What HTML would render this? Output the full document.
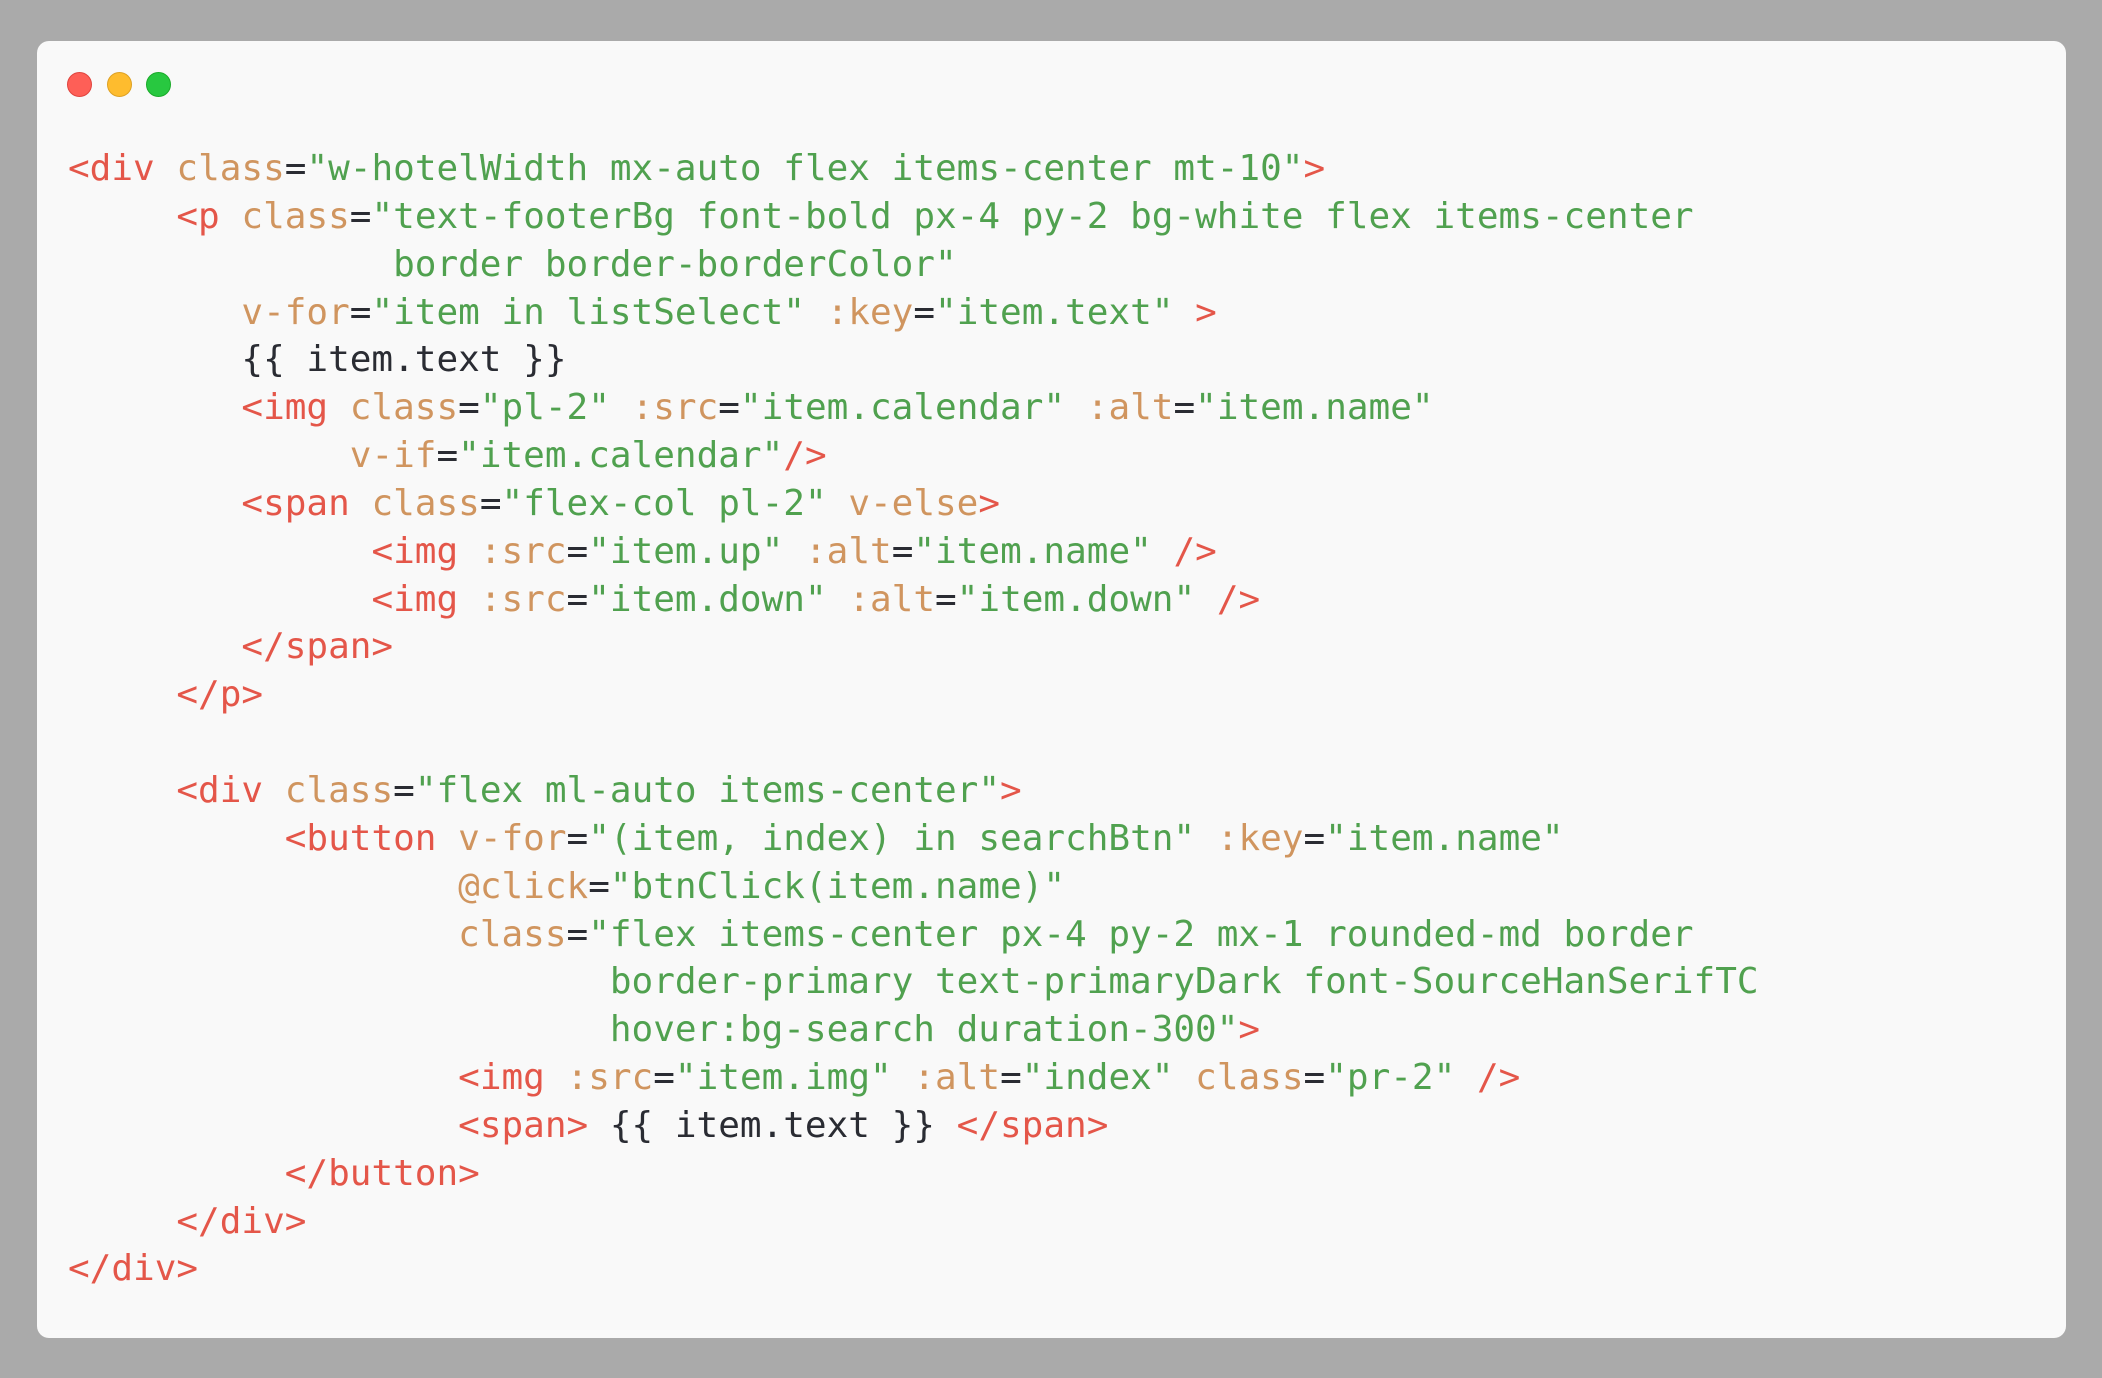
<!DOCTYPE html>
<html><head><meta charset="utf-8"><style>
html,body{margin:0;padding:0;background:#aaaaaa;width:2102px;height:1378px;overflow:hidden}
.card{position:absolute;left:37px;top:41px;width:2029px;height:1297px;background:#f9f9f9;border-radius:12px}
.dot{position:absolute;top:72px;width:25px;height:25px;border-radius:50%}
pre{position:absolute;left:68px;top:145px;margin:0;font-family:"DejaVu Sans Mono","Liberation Mono",monospace;font-size:36px;line-height:47.85px;color:#2a2c33}
.t{color:#e45649}.a{color:#d0955f}.s{color:#50a14f}
</style></head><body>
<div class="card"></div>
<div class="dot" style="left:67px;background:#fe5f57;border:1px solid #e0443e;box-sizing:border-box"></div>
<div class="dot" style="left:107px;background:#febc2e;border:1px solid #dea123;box-sizing:border-box"></div>
<div class="dot" style="left:146px;background:#28c840;border:1px solid #1aab29;box-sizing:border-box"></div>
<pre><span class="t">&lt;div</span> <span class="a">class</span>=<span class="s">"w-hotelWidth mx-auto flex items-center mt-10"</span><span class="t">&gt;</span>
     <span class="t">&lt;p</span> <span class="a">class</span>=<span class="s">"text-footerBg font-bold px-4 py-2 bg-white flex items-center</span>
<span class="s">               border border-borderColor"</span>
        <span class="a">v-for</span>=<span class="s">"item in listSelect"</span> <span class="a">:key</span>=<span class="s">"item.text"</span> <span class="t">&gt;</span>
        {{ item.text }}
        <span class="t">&lt;img</span> <span class="a">class</span>=<span class="s">"pl-2"</span> <span class="a">:src</span>=<span class="s">"item.calendar"</span> <span class="a">:alt</span>=<span class="s">"item.name"</span>
             <span class="a">v-if</span>=<span class="s">"item.calendar"</span><span class="t">/&gt;</span>
        <span class="t">&lt;span</span> <span class="a">class</span>=<span class="s">"flex-col pl-2"</span> <span class="a">v-else</span><span class="t">&gt;</span>
              <span class="t">&lt;img</span> <span class="a">:src</span>=<span class="s">"item.up"</span> <span class="a">:alt</span>=<span class="s">"item.name"</span> <span class="t">/&gt;</span>
              <span class="t">&lt;img</span> <span class="a">:src</span>=<span class="s">"item.down"</span> <span class="a">:alt</span>=<span class="s">"item.down"</span> <span class="t">/&gt;</span>
        <span class="t">&lt;/span&gt;</span>
     <span class="t">&lt;/p&gt;</span>

     <span class="t">&lt;div</span> <span class="a">class</span>=<span class="s">"flex ml-auto items-center"</span><span class="t">&gt;</span>
          <span class="t">&lt;button</span> <span class="a">v-for</span>=<span class="s">"(item, index) in searchBtn"</span> <span class="a">:key</span>=<span class="s">"item.name"</span>
                  <span class="a">@click</span>=<span class="s">"btnClick(item.name)"</span>
                  <span class="a">class</span>=<span class="s">"flex items-center px-4 py-2 mx-1 rounded-md border</span>
<span class="s">                         border-primary text-primaryDark font-SourceHanSerifTC</span>
<span class="s">                         hover:bg-search duration-300"</span><span class="t">&gt;</span>
                  <span class="t">&lt;img</span> <span class="a">:src</span>=<span class="s">"item.img"</span> <span class="a">:alt</span>=<span class="s">"index"</span> <span class="a">class</span>=<span class="s">"pr-2"</span> <span class="t">/&gt;</span>
                  <span class="t">&lt;span&gt;</span> {{ item.text }} <span class="t">&lt;/span&gt;</span>
          <span class="t">&lt;/button&gt;</span>
     <span class="t">&lt;/div&gt;</span>
<span class="t">&lt;/div&gt;</span></pre>
</body></html>
